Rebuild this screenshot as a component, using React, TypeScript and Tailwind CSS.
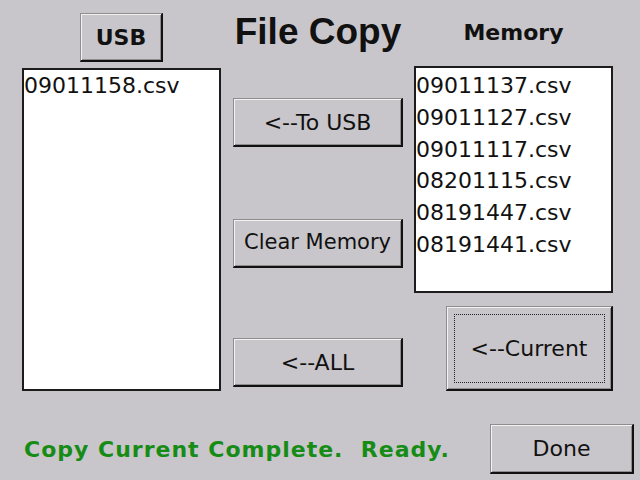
const memoryFiles = [
  "09011137.csv",
  "09011127.csv",
  "09011117.csv",
  "08201115.csv",
  "08191447.csv",
  "08191441.csv",
];

const usbFiles = ["09011158.csv"];

// classic CE-style raised button
const btn =
  "flex items-center justify-center bg-[#c8c6ca] text-[#111] border-t border-l border-t-[#8e8e8e] border-l-[#8e8e8e] border-r-2 border-b-2 border-r-[#111] border-b-[#111] shadow-[inset_1px_1px_0_#f2f2f2,inset_-1px_-1px_0_#8e8e8e]";

const App = () => {
  return (
    <div className="w-[640px] h-[480px] bg-[#c8c6ca] font-['DejaVu_Sans',sans-serif] text-[#111] overflow-hidden">
      <div className="flex pl-[22px]">
        {/* USB side */}
        <div className="w-[199px] flex flex-col pt-[13px]">
          <button className={`${btn} ml-[58px] w-[83px] h-[49px] text-[22px] font-bold`}>
            USB
          </button>
          <div className="mt-[6px] h-[323px] bg-white border-2 border-[#1c1c1c] text-[22px] leading-[31.8px]">
            {usbFiles.map((f) => (
              <div key={f}>{f}</div>
            ))}
          </div>
        </div>

        {/* Actions */}
        <div className="ml-[12px] w-[170px] flex flex-col">
          <h1 className="pt-[11px] h-[53px] text-center font-['Liberation_Sans',sans-serif] font-bold text-[37px] leading-[42px]">
            File Copy
          </h1>
          <button className={`${btn} mt-[45px] h-[49px] text-[22px]`}>&lt;--To USB</button>
          <button className={`${btn} mt-[72px] h-[49px] text-[21px]`}>Clear Memory</button>
          <button className={`${btn} mt-[70px] h-[49px] text-[22px]`}>&lt;--ALL</button>
        </div>

        {/* Memory side */}
        <div className="ml-[11px] w-[199px] flex flex-col">
          <div className="pt-[20px] h-[46px] text-center font-bold text-[22px] leading-[26px]">
            Memory
          </div>
          <div className="mt-[20px] h-[227px] bg-white border-2 border-[#1c1c1c] pt-[2px] text-[22px] leading-[31.8px]">
            {memoryFiles.map((f) => (
              <div key={f}>{f}</div>
            ))}
          </div>
          <button
            className={`${btn} mt-[13px] ml-[32px] w-[167px] h-[85px] text-[22px] outline-1 outline-dotted outline-[#222] outline-offset-[-9px]`}
          >
            &lt;--Current
          </button>
        </div>
      </div>

      {/* Status bar */}
      <div className="mt-[33px] flex items-center justify-between pl-[24px] pr-[6px]">
        <span className="whitespace-pre font-bold text-[22px] tracking-[1px] text-[#168c16]">
          {"Copy Current Complete.  Ready."}
        </span>
        <button className={`${btn} w-[144px] h-[50px] text-[22px]`}>Done</button>
      </div>
    </div>
  );
};

export default App;
